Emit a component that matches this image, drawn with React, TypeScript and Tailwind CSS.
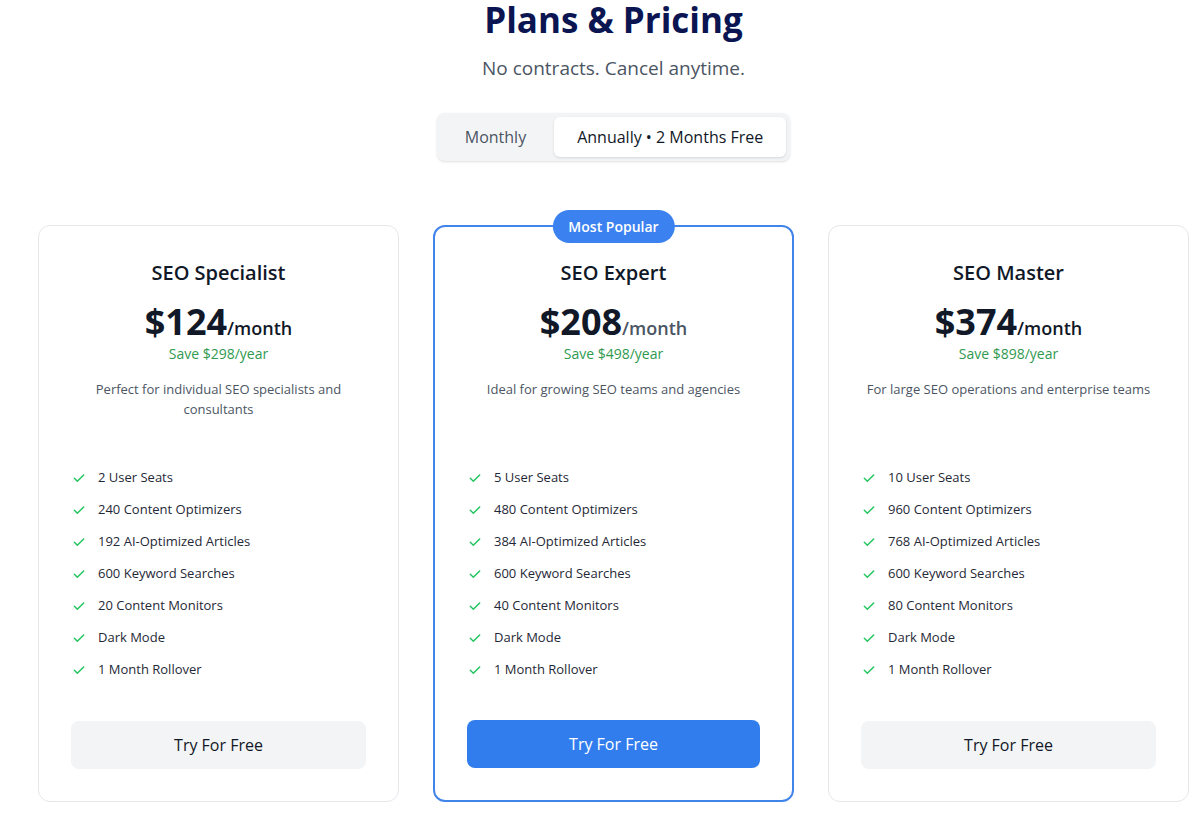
import React from "react";

const Check = () => (
  <svg width="16" height="16" viewBox="0 0 24 24" fill="none" stroke="#22c55e" strokeWidth="2.2" strokeLinecap="round" strokeLinejoin="round" className="shrink-0">
    <path d="M5 12.5l4.5 4.5L19 7.5" />
  </svg>
);

type Plan = {
  name: string;
  price: string;
  save: string;
  desc: string;
  features: string[];
  popular?: boolean;
};

const plans: Plan[] = [
  {
    name: "SEO Specialist",
    price: "$124",
    save: "Save $298/year",
    desc: "Perfect for individual SEO specialists and consultants",
    features: ["2 User Seats", "240 Content Optimizers", "192 AI-Optimized Articles", "600 Keyword Searches", "20 Content Monitors", "Dark Mode", "1 Month Rollover"],
  },
  {
    name: "SEO Expert",
    price: "$208",
    save: "Save $498/year",
    desc: "Ideal for growing SEO teams and agencies",
    features: ["5 User Seats", "480 Content Optimizers", "384 AI-Optimized Articles", "600 Keyword Searches", "40 Content Monitors", "Dark Mode", "1 Month Rollover"],
    popular: true,
  },
  {
    name: "SEO Master",
    price: "$374",
    save: "Save $898/year",
    desc: "For large SEO operations and enterprise teams",
    features: ["10 User Seats", "960 Content Optimizers", "768 AI-Optimized Articles", "600 Keyword Searches", "80 Content Monitors", "Dark Mode", "1 Month Rollover"],
  },
];

function Card({ plan }: { plan: Plan }) {
  return (
    <div
      className={
        "relative w-[361px] h-[577px] rounded-xl bg-white flex flex-col px-8 " +
        (plan.popular ? "border-2 border-[#4285ea] pt-[32px]" : "border border-[#e5e7eb] pt-[33px]")
      }
    >
      {plan.popular && (
        <div className="absolute left-1/2 -translate-x-1/2 -top-[17px] h-[33px] px-4 rounded-full bg-[#3b82f0] text-white text-sm font-semibold flex items-center">
          Most Popular
        </div>
      )}
      <h3 className="text-center text-xl leading-7 font-semibold text-[#111827]">{plan.name}</h3>
      <div className="mt-[15px] flex items-baseline justify-center h-10">
        <span className="text-4xl leading-10 font-bold text-[#111827]">{plan.price}</span>
        <span className={"text-lg font-semibold " + (plan.popular ? "text-[#4b5563]" : "text-[#111827]")}>/month</span>
      </div>
      <div className="mt-[2px] text-center text-sm leading-5 font-medium text-[#2f9a50]">{plan.save}</div>
      <p className="mt-[15px] h-16 text-center text-[13px] leading-5 text-[#4b5563]">{plan.desc}</p>
      <ul className="mt-[25px] flex flex-col gap-3">
        {plan.features.map((f) => (
          <li key={f} className="flex items-center gap-[11px] h-5 text-[13px] text-[#1f2937]">
            <Check />
            <span>{f}</span>
          </li>
        ))}
      </ul>
      <button
        className={
          "mt-auto mb-8 h-12 w-full rounded-lg text-base font-medium " +
          (plan.popular ? "bg-[#317ded] text-white" : "bg-[#f3f4f6] text-[#111827]")
        }
      >
        Try For Free
      </button>
    </div>
  );
}

export default function App() {
  return (
    <div className="min-h-screen bg-white" style={{ fontFamily: '"Open Sans", "Noto Sans", sans-serif' }}>
      <div className="pl-[38px] w-[1189px]">
        <div className="flex flex-col items-center">
          <h1 className="text-[35px] leading-10 font-bold text-[#0b1551]">Plans &amp; Pricing</h1>
          <p className="mt-[14px] text-[19px] leading-7 text-[#4b5563]">No contracts. Cancel anytime.</p>
          <div className="mt-[31px] flex gap-1 p-1 rounded-lg bg-[#f3f4f6] shadow-sm">
            <button className="h-10 px-6 rounded-md text-base font-medium text-[#4b5563]">Monthly</button>
            <button className="h-10 px-[23px] rounded-md bg-white shadow-sm text-base font-medium text-[#111827]">
              Annually • 2 Months Free
            </button>
          </div>
        </div>
        <div className="mt-16 flex gap-[34px]">
          {plans.map((p) => (
            <Card key={p.name} plan={p} />
          ))}
        </div>
      </div>
    </div>
  );
}
